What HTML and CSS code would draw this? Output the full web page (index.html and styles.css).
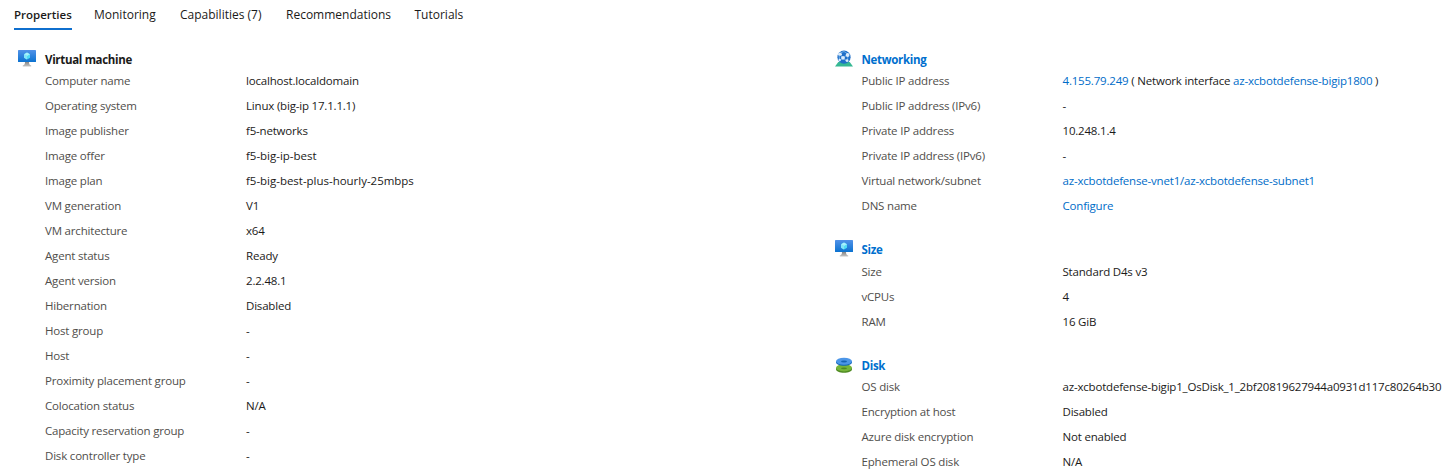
FILE: index.html
```html
<!DOCTYPE html>
<html lang="en">
<head>
<meta charset="utf-8">
<title>Virtual machine properties</title>
<link rel="stylesheet" href="styles.css">
</head>
<body>
<svg class="defs" width="0" height="0" aria-hidden="true">
  <defs>
    <linearGradient id="screen" x1="0" y1="1" x2="0" y2="0"><stop offset="0" stop-color="#0b72d0"/><stop offset="1" stop-color="#5292e8"/></linearGradient>
    <linearGradient id="stand" x1="0" y1="0" x2="0" y2="1"><stop offset="0" stop-color="#858585"/><stop offset="1" stop-color="#c4c4c4"/></linearGradient>
    <symbol id="vm" viewBox="0 0 18 17">
      <rect width="18" height="12" rx=".6" fill="url(#screen)"/>
      <path d="M7 12h4c0 2 .4 3 2.200 3.400v1H4.800v-1C6.600 15 7 14 7 12z" fill="url(#stand)"/>
      <path d="M9 2.600l3 1.750v3.500L9 9.600 6 7.850v-3.500z" fill="#4fdcf5"/>
      <path d="M9 2.600l3 1.750L9 6.100 6 4.350z" fill="#a8f0fb"/>
      <path d="M6 4.350L9 6.100v3.500L6 7.850z" fill="#83e5f8"/>
    </symbol>
  </defs>
</svg>
<nav class="tabs">
  <a class="tab tab-active">Properties</a>
  <a class="tab">Monitoring</a>
  <a class="tab">Capabilities (7)</a>
  <a class="tab">Recommendations</a>
  <a class="tab">Tutorials</a>
</nav>
<main class="columns">
  <div class="column">
    <section class="group">
      <h2 class="heading"><svg class="icon" width="18" height="17"><use href="#vm"/></svg><span>Virtual machine</span></h2>
      <dl class="rows">
        <dt>Computer name</dt><dd>localhost.localdomain</dd>
        <dt>Operating system</dt><dd>Linux (big-ip 17.1.1.1)</dd>
        <dt>Image publisher</dt><dd>f5-networks</dd>
        <dt>Image offer</dt><dd class="hyphenated">f5-big-ip-best</dd>
        <dt>Image plan</dt><dd class="hyphenated">f5-big-best-plus-hourly-25mbps</dd>
        <dt>VM generation</dt><dd>V1</dd>
        <dt>VM architecture</dt><dd>x64</dd>
        <dt>Agent status</dt><dd>Ready</dd>
        <dt>Agent version</dt><dd>2.2.48.1</dd>
        <dt>Hibernation</dt><dd>Disabled</dd>
        <dt>Host group</dt><dd>-</dd>
        <dt>Host</dt><dd>-</dd>
        <dt>Proximity placement group</dt><dd>-</dd>
        <dt>Colocation status</dt><dd>N/A</dd>
        <dt>Capacity reservation group</dt><dd>-</dd>
        <dt>Disk controller type</dt><dd>-</dd>
      </dl>
    </section>
  </div>
  <div class="column">
    <section class="group">
      <h2 class="heading heading-link">
        <svg class="icon" width="18" height="17" viewBox="0 0 18 17">
          <path d="M3.300 12h11.400L18 16.500H0z" fill="#35b893"/>
          <circle cx="9" cy="7.200" r="6.600" fill="#1f6fc8"/>
          <path d="M4 3.500L8 8l5-4M8 8l-3.500 2.500M8 8l4.500 3.500M13 4l-.5 7.500M4 3.500l.5 7M4 3.500L9 1.500l4 2.500" fill="none" stroke="#8cc4f3" stroke-width=".7"/>
          <g fill="#dcecfb"><ellipse cx="5" cy="4.200" rx="2" ry="1.500"/><circle cx="8" cy="7.800" r="1.900"/><circle cx="12.600" cy="5" r="1.900"/><circle cx="12" cy="10.600" r="1.400"/><circle cx="4.700" cy="10" r="1.200"/></g>
        </svg><span>Networking</span></h2>
      <dl class="rows">
        <dt>Public IP address</dt><dd><a>4.155.79.249</a> ( Network interface <a>az-xcbotdefense-bigip1800</a> )</dd>
        <dt>Public IP address (IPv6)</dt><dd>-</dd>
        <dt>Private IP address</dt><dd>10.248.1.4</dd>
        <dt>Private IP address (IPv6)</dt><dd>-</dd>
        <dt>Virtual network/subnet</dt><dd><a>az-xcbotdefense-vnet1/az-xcbotdefense-subnet1</a></dd>
        <dt>DNS name</dt><dd><a>Configure</a></dd>
      </dl>
    </section>
    <section class="group group-size">
      <h2 class="heading heading-link"><svg class="icon" width="18" height="17"><use href="#vm"/></svg><span>Size</span></h2>
      <dl class="rows">
        <dt>Size</dt><dd>Standard D4s v3</dd>
        <dt>vCPUs</dt><dd>4</dd>
        <dt>RAM</dt><dd>16 GiB</dd>
      </dl>
    </section>
    <section class="group">
      <h2 class="heading heading-link">
        <svg class="icon" width="18" height="17" viewBox="0 -.8 18 17">
          <path d="M1 11v1.500C1 14.700 4.600 16 9 16s8-1.300 8-3.500V11z" fill="#4f8a22"/>
          <ellipse cx="9" cy="11" rx="8" ry="3.600" fill="#76b53a"/>
          <ellipse cx="9" cy="11.500" rx="3" ry=".9" fill="#4f8a22"/>
          <path d="M1 4.500V5.500c0 2.200 3.600 3.500 8 3.500S17 7.700 17 5.500V4.500z" fill="#1267b8"/>
          <ellipse cx="9" cy="4.500" rx="8" ry="3.500" fill="#4c96e8"/>
          <ellipse cx="9" cy="4.700" rx="3" ry=".9" fill="#1563b3"/>
        </svg><span>Disk</span></h2>
      <dl class="rows">
        <dt>OS disk</dt><dd>az-xcbotdefense-bigip1_OsDisk_1_2bf20819627944a0931d117c80264b30</dd>
        <dt>Encryption at host</dt><dd>Disabled</dd>
        <dt>Azure disk encryption</dt><dd>Not enabled</dd>
        <dt>Ephemeral OS disk</dt><dd>N/A</dd>
      </dl>
    </section>
  </div>
</main>
</body>
</html>
```
FILE: styles.css
```css
* { box-sizing: border-box; }
body {
  margin: 0;
  height: 471px;
  overflow: hidden;
  background: #fff;
  color: #1b1a19;
  font: 11.5px/25px "Open Sans", "Noto Sans", sans-serif;
}
.defs { display: block; }
.tabs {
  display: grid;
  grid-template-columns: 80px 86px 106px 128.5px auto;
  justify-items: start;
  height: 49px;
  padding: 2px 0 0 14px;
  font-size: 12px;
}
.tab { height: 28px; white-space: nowrap; }
.tab-active { font-size: 11.5px; font-weight: 600; border-bottom: 2px solid #0f6fce; }
.columns { display: grid; grid-template-columns: 816.5px 635.5px; }
.column { display: flex; flex-direction: column; gap: 21px; }
.heading {
  display: grid;
  grid-template-columns: 27px auto;
  align-items: start;
  height: 19px;
  margin: 0;
  padding-left: 18px;
  font-size: 11.5px;
  line-height: 22px;
  font-weight: 700;
  letter-spacing: -.32px;
}
.group-size .heading { height: 20px; }
.heading-link { color: #006fce; }
.icon { display: block; margin-top: 1px; }
.rows {
  display: grid;
  grid-template-columns: 201px auto;
  grid-auto-rows: 25px;
  margin: 0;
  padding-left: 45px;
  white-space: nowrap;
  letter-spacing: -.19px;
}
.rows dt { color: #504e4b; }
.rows dd { margin: 0; }
.rows .hyphenated { letter-spacing: -.02px; }
.rows a { color: #006cc8; }
```
